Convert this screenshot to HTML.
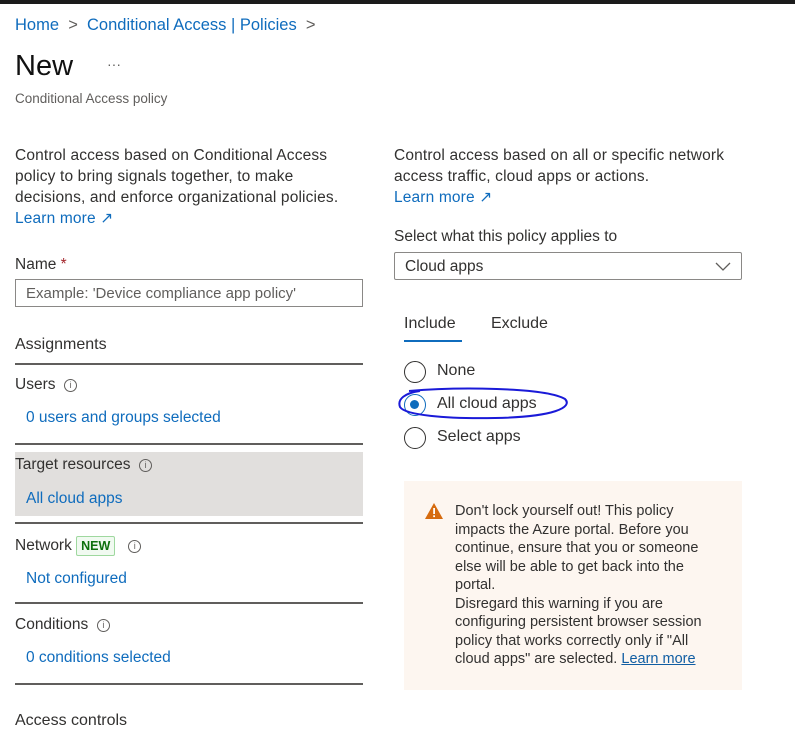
<!DOCTYPE html>
<html><head><style>
body{margin:0;width:795px;height:733px;background:#fff;position:relative;overflow:hidden;font-family:"Liberation Sans",sans-serif;color:#323130;font-size:15.5px}
.a{position:absolute;white-space:nowrap}
.l{color:#0f6cbd}
.hr{position:absolute;left:15px;width:348px;height:2px;background:#605e5c}
.info{display:inline-block;width:11px;height:11px;border:1px solid #605e5c;border-radius:50%;font-size:9px;line-height:11px;text-align:center;color:#605e5c;vertical-align:1px}
.radio{position:absolute;width:18px;height:18px;border:1.5px solid #323130;border-radius:50%;box-sizing:border-box}
</style></head><body>
<div class="a" style="left:0;top:0;width:795px;height:4px;background:#1b1b1b"></div>
<div class="a l" style="left:15px;top:16px;font-size:16.5px">Home <span style="color:#605e5c">&nbsp;&gt;&nbsp;</span> Conditional Access | Policies <span style="color:#605e5c">&nbsp;&gt;</span></div>
<div class="a" style="left:15px;top:50px;font-size:29px;color:#111">New</div>
<div class="a" style="left:107px;top:56px;font-size:14px;color:#605e5c">···</div>
<div class="a" style="left:15px;top:91px;font-size:13.5px;color:#605e5c">Conditional Access policy</div>

<div class="a" style="left:15px;top:145px;line-height:21px;letter-spacing:0.15px">Control access based on Conditional Access<br>policy to bring signals together, to make<br>decisions, and enforce organizational policies.<br><span class="l">Learn more ↗</span></div>
<div class="a" style="left:15px;top:256px">Name <span style="color:#a4262c">*</span></div>
<div class="a" style="left:15px;top:279px;width:348px;height:28px;border:1px solid #8a8886;box-sizing:border-box;padding:5px 10px;font-size:15px;color:#605e5c">Example: 'Device compliance app policy'</div>
<div class="a" style="left:15px;top:336px;font-size:16px">Assignments</div>
<div class="hr" style="top:363px"></div>
<div class="a" style="left:15px;top:376px">Users &nbsp;<span class="info">i</span></div>
<div class="a l" style="left:26px;top:409px">0 users and groups selected</div>
<div class="hr" style="top:443px"></div>
<div class="a" style="left:15px;top:452px;width:348px;height:64px;background:#e1dfdd"></div>
<div class="a" style="left:15px;top:456px">Target resources &nbsp;<span class="info">i</span></div>
<div class="a l" style="left:26px;top:490px">All cloud apps</div>
<div class="hr" style="top:522px"></div>
<div class="a" style="left:15px;top:536px">Network <span style="display:inline-block;border:1px solid #9fd89f;background:#f1faf1;color:#0e700e;font-weight:bold;font-size:12.5px;padding:2px 4px;border-radius:2px">NEW</span> &nbsp;&nbsp;<span class="info">i</span></div>
<div class="a l" style="left:26px;top:570px">Not configured</div>
<div class="hr" style="top:602px"></div>
<div class="a" style="left:15px;top:616px">Conditions &nbsp;<span class="info">i</span></div>
<div class="a l" style="left:26px;top:649px">0 conditions selected</div>
<div class="hr" style="top:683px"></div>
<div class="a" style="left:15px;top:712px;font-size:16px">Access controls</div>

<div class="a" style="left:394px;top:145px;line-height:21px;letter-spacing:0.15px">Control access based on all or specific network<br>access traffic, cloud apps or actions.<br><span class="l">Learn more ↗</span></div>
<div class="a" style="left:394px;top:228px">Select what this policy applies to</div>
<div class="a" style="left:394px;top:252px;width:348px;height:28px;border:1px solid #8a8886;border-radius:2px;box-sizing:border-box;padding:5px 10px">Cloud apps
<svg style="position:absolute;right:10px;top:9px" width="16" height="9"><path d="M1 1l7 7 7-7" fill="none" stroke="#605e5c" stroke-width="1.3"/></svg></div>
<div class="a" style="left:404px;top:315px;font-size:16px">Include</div>
<div class="a" style="left:404px;top:340px;width:58px;height:2px;background:#0f6cbd"></div>
<div class="a" style="left:491px;top:315px;font-size:16px">Exclude</div>
<div class="radio" style="left:404px;top:361px;width:22px;height:22px"></div>
<div class="a" style="left:437px;top:362px;font-size:16px">None</div>
<div class="radio" style="left:404px;top:394px;width:22px;height:22px;border-color:#0f6cbd"><div style="position:absolute;left:5px;top:5px;width:9px;height:9px;border-radius:50%;background:#0f6cbd"></div></div>
<div class="a" style="left:437px;top:395px;font-size:16px">All cloud apps</div>
<div class="radio" style="left:404px;top:427px;width:22px;height:22px"></div>
<div class="a" style="left:437px;top:428px;font-size:16px">Select apps</div>
<svg class="a" style="left:395px;top:385px" width="180" height="40"><path d="M14 6 C60 2 150 2 170 14 C178 22 160 32 100 33 C50 34 10 30 5 22 C2 14 10 8 25 6" fill="none" stroke="#1a1ad8" stroke-width="2"/></svg>

<div class="a" style="left:404px;top:481px;width:338px;height:209px;background:#fdf6f0"></div>
<svg class="a" style="left:424px;top:502px" width="20" height="18"><path d="M10 1L19 17H1Z" fill="#d66b0f"/><rect x="9.2" y="6" width="1.8" height="6" fill="#fff"/><rect x="9.2" y="13.3" width="1.8" height="1.8" fill="#fff"/></svg>
<div class="a" style="left:455px;top:502px;font-size:14.5px;line-height:18.5px">Don't lock yourself out! This policy<br>impacts the Azure portal. Before you<br>continue, ensure that you or someone<br>else will be able to get back into the<br>portal.<br>Disregard this warning if you are<br>configuring persistent browser session<br>policy that works correctly only if "All<br>cloud apps" are selected. <span style="color:#115ea3;text-decoration:underline">Learn more</span></div>
</body></html>
